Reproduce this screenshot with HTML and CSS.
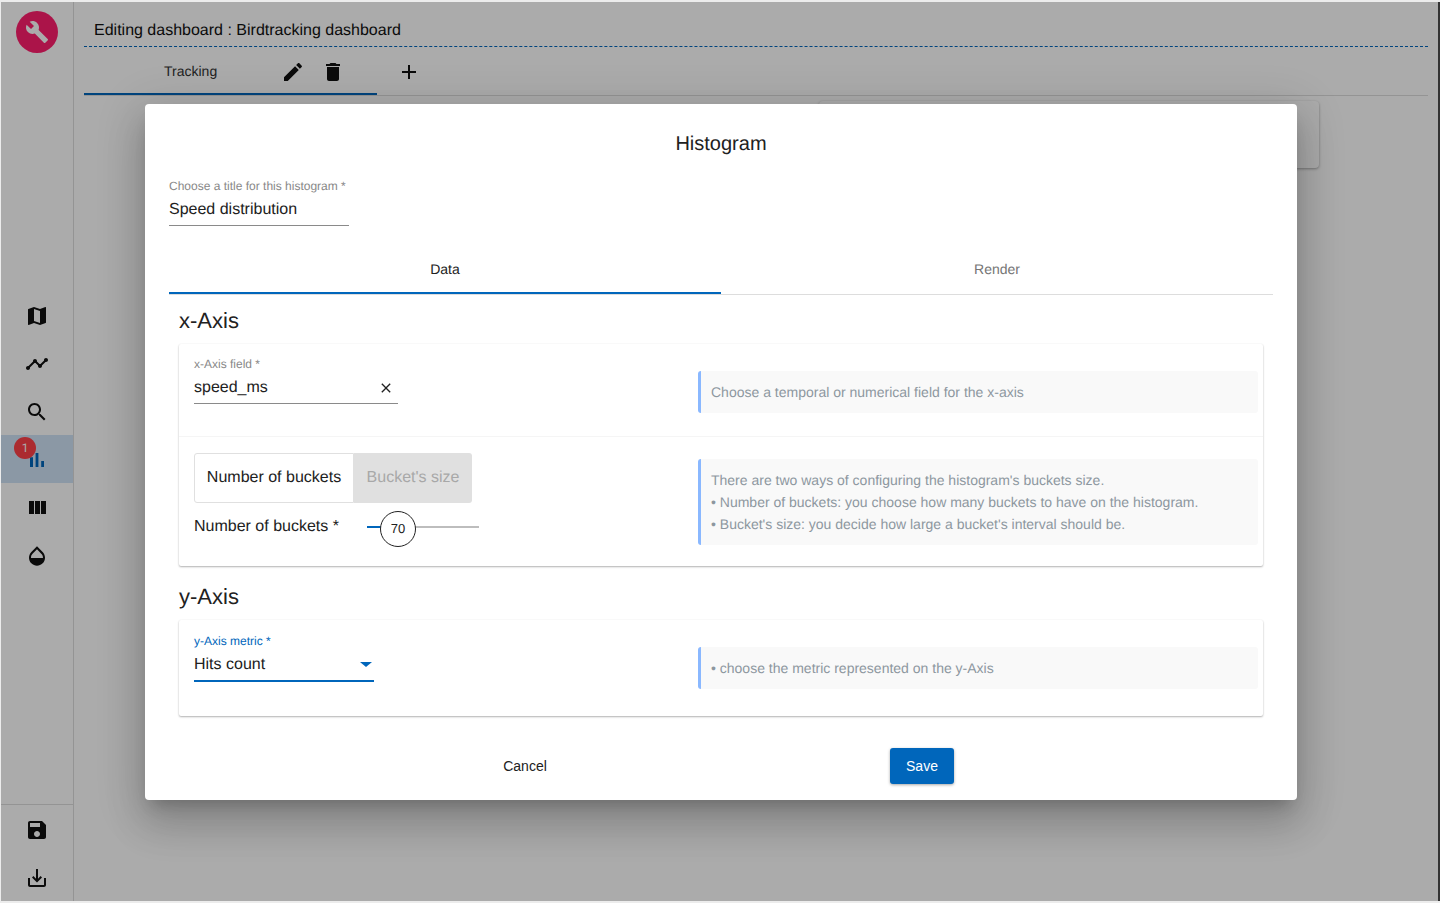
FILE: index.html
```html
<!DOCTYPE html>
<html lang="en">
<head>
    <meta charset="UTF-8">
    <meta name="viewport" content="width=device-width, initial-scale=1.0">
    <title>Editing dashboard</title>
    <link rel="stylesheet" href="styles.css">
</head>
<body>
    <div class="app">
        <aside class="sidebar">
            <div class="sidebar-top">
                <div class="logo">
                    <svg viewBox="0 0 24 24"><path d="M22.7 19l-9.1-9.1c.9-2.3.4-5-1.5-6.9-2-2-5-2.4-7.4-1.3L9 6 6 9 1.6 4.7C.4 7.1.9 10.1 2.9 12.1c1.9 1.9 4.6 2.4 6.9 1.5l9.1 9.1c.4.4 1 .4 1.4 0l2.3-2.3c.5-.4.5-1.1.1-1.4z"/></svg>
                </div>
            </div>
            <nav class="sidebar-nav">
                <div class="nav-item"><svg viewBox="0 0 24 24"><path d="M20.5 3l-.16.03L15 5.1 9 3 3.36 4.9c-.21.07-.36.25-.36.48V20.5c0 .28.22.5.5.5l.16-.03L9 18.9l6 2.1 5.64-1.9c.21-.07.36-.25.36-.48V3.5c0-.28-.22-.5-.5-.5zM15 19l-6-2.11V5l6 2.11V19z"/></svg></div>
                <div class="nav-item"><svg viewBox="0 0 24 24"><path d="M23 8c0 1.1-.9 2-2 2-.18 0-.35-.02-.51-.07l-3.56 3.55c.05.16.07.34.07.52 0 1.1-.9 2-2 2s-2-.9-2-2c0-.18.02-.36.07-.52l-2.55-2.55c-.16.05-.34.07-.52.07s-.36-.02-.52-.07l-4.55 4.56c.05.16.07.33.07.51 0 1.1-.9 2-2 2s-2-.9-2-2 .9-2 2-2c.18 0 .35.02.51.07l4.56-4.55C8.02 9.36 8 9.18 8 9c0-1.1.9-2 2-2s2 .9 2 2c0 .18-.02.36-.07.52l2.55 2.55c.16-.05.34-.07.52-.07s.36.02.52.07l3.55-3.56C19.02 8.35 19 8.18 19 8c0-1.1.9-2 2-2s2 .9 2 2z"/></svg></div>
                <div class="nav-item"><svg viewBox="0 0 24 24"><path d="M15.5 14h-.79l-.28-.27C15.41 12.59 16 11.11 16 9.5 16 5.91 13.09 3 9.5 3S3 5.91 3 9.5 5.91 16 9.5 16c1.61 0 3.09-.59 4.23-1.57l.27.28v.79l5 4.99L20.49 19l-4.99-5zm-6 0C7.01 14 5 11.99 5 9.5S7.01 5 9.5 5 14 7.01 14 9.5 11.99 14 9.5 14z"/></svg></div>
                <div class="nav-item active">
                    <svg viewBox="0 0 24 24"><path d="M5 9.2h3V19H5zM10.6 5h2.8v14h-2.8zm5.6 8H19v6h-2.8z"/></svg>
                    <span class="badge">1</span>
                </div>
                <div class="nav-item"><svg viewBox="0 0 24 24"><path d="M10 18h5V5h-5v13zm-6 0h5V5H4v13zM16 5v13h5V5h-5z"/></svg></div>
                <div class="nav-item"><svg viewBox="0 0 24 24"><path d="M17.66 8L12 2.35 6.34 8C4.78 9.56 4 11.64 4 13.64s.78 4.11 2.34 5.67 3.61 2.35 5.66 2.35 4.1-.79 5.66-2.35S20 15.64 20 13.64 19.22 9.56 17.66 8zM6 14c.01-2 .62-3.27 1.76-4.4L12 5.27l4.24 4.38C17.38 10.77 17.99 12 18 14H6z"/></svg></div>
            </nav>
            <div class="sidebar-bottom">
                <div class="nav-item"><svg viewBox="0 0 24 24"><path d="M17 3H5c-1.11 0-2 .9-2 2v14c0 1.1.89 2 2 2h14c1.1 0 2-.9 2-2V7l-4-4zm-5 16c-1.66 0-3-1.34-3-3s1.34-3 3-3 3 1.34 3 3-1.34 3-3 3zm3-10H5V5h10v4z"/></svg></div>
                <div class="nav-item"><svg viewBox="0 0 24 24"><path d="M19 12v7H5v-7H3v7c0 1.1.9 2 2 2h14c1.1 0 2-.9 2-2v-7h-2zm-6 .67l2.59-2.58L17 11.5l-5 5-5-5 1.41-1.41L11 12.67V3h2z"/></svg></div>
            </div>
        </aside>

        <main class="content">
            <div class="dash-title">Editing dashboard : Birdtracking dashboard</div>
            <div class="dash-tabs">
                <div class="dash-tab">
                    <span class="dash-tab-label">Tracking</span>
                    <svg class="tab-edit" viewBox="0 0 24 24"><path d="M3 17.25V21h3.75L17.81 9.94l-3.75-3.75L3 17.25zM20.71 7.04c.39-.39.39-1.02 0-1.41l-2.34-2.34c-.39-.39-1.02-.39-1.41 0l-1.83 1.83 3.75 3.75 1.83-1.83z"/></svg>
                    <svg class="tab-delete" viewBox="0 0 24 24"><path d="M6 19c0 1.1.9 2 2 2h8c1.1 0 2-.9 2-2V7H6v12zM19 4h-3.5l-1-1h-5l-1 1H5v2h14V4z"/></svg>
                </div>
                <svg class="tab-add" viewBox="0 0 24 24"><path d="M19 13h-6v6h-2v-6H5v-2h6V5h2v6h6v2z"/></svg>
            </div>
            <div class="dash-grid">
                <div class="dash-widget"></div>
            </div>
        </main>

        <div class="overlay"></div>
    </div>

    <div class="modal-wrap">
        <div class="modal">
            <h2 class="modal-title">Histogram</h2>

            <div class="title-field">
                <label class="field-label">Choose a title for this histogram *</label>
                <div class="field-value">Speed distribution</div>
            </div>

            <div class="modal-tabs">
                <div class="modal-tab selected">Data</div>
                <div class="modal-tab">Render</div>
            </div>

            <h3 class="section-title">x-Axis</h3>
            <div class="card">
                <div class="card-row row-field">
                    <div class="axis-field">
                        <label class="field-label">x-Axis field *</label>
                        <div class="field-value">
                            <span>speed_ms</span>
                            <svg class="clear-icon" viewBox="0 0 24 24"><path d="M19 6.41L17.59 5 12 10.59 6.41 5 5 6.41 10.59 12 5 17.59 6.41 19 12 13.41 17.59 19 19 17.59 13.41 12z"/></svg>
                        </div>
                    </div>
                    <div class="note">Choose a temporal or numerical field for the x-axis</div>
                </div>
                <div class="card-row row-buckets">
                    <div>
                        <div class="toggle">
                            <div class="toggle-btn on">Number of buckets</div>
                            <div class="toggle-btn off">Bucket's size</div>
                        </div>
                        <div class="slider-row">
                            <span class="slider-label">Number of buckets *</span>
                            <div class="slider">
                                <div class="slider-fill"></div>
                                <div class="slider-thumb">70</div>
                            </div>
                        </div>
                    </div>
                    <div class="note">
                        <div>There are two ways of configuring the histogram's buckets size.</div>
                        <div>• Number of buckets: you choose how many buckets to have on the histogram.</div>
                        <div>• Bucket's size: you decide how large a bucket's interval should be.</div>
                    </div>
                </div>
            </div>

            <h3 class="section-title second">y-Axis</h3>
            <div class="card">
                <div class="card-row row-metric">
                    <div class="metric-field">
                        <label class="field-label focus">y-Axis metric *</label>
                        <div class="field-value">
                            <span>Hits count</span>
                            <span class="select-arrow"></span>
                        </div>
                    </div>
                    <div class="note">• choose the metric represented on the y-Axis</div>
                </div>
            </div>

            <div class="modal-actions">
                <button class="btn-cancel">Cancel</button>
                <button class="btn-save">Save</button>
            </div>
        </div>
    </div>
</body>
</html>
```

FILE: styles.css
```css
* {
    box-sizing: border-box;
}
html, body {
    margin: 0;
    height: 903px;
    overflow: hidden;
}
body {
    font-family: "Liberation Sans", Arial, sans-serif;
    text-rendering: geometricPrecision;
    background-color: #ececec;
    color: #212121;
    position: relative;
}

/* page behind the dialog */
.app {
    position: relative;
    display: flex;
    height: 899px;
    margin: 2px 0 0 1px;
    background: #fff;
    border-right: 2px solid #333;
    color: #111;
}
.overlay {
    position: absolute;
    inset: 0;
    background: rgba(0, 0, 0, 0.33);
}
.sidebar {
    width: 73px;
    flex-shrink: 0;
    display: flex;
    flex-direction: column;
    border-right: 1px solid #ddd;
}
.sidebar-top {
    height: 289px;
    padding: 9px 0 0 15px;
}
.logo {
    width: 42px;
    height: 42px;
    border-radius: 50%;
    background: #ff1f6e;
    display: flex;
    align-items: center;
    justify-content: center;
}
.logo svg {
    width: 24px;
    height: 24px;
    fill: #fff;
}
.sidebar-nav {
    flex: 1;
}
.sidebar-bottom {
    border-top: 1px solid #ddd;
}
.nav-item {
    position: relative;
    height: 48px;
    padding-top: 2px;
    display: flex;
    align-items: center;
    justify-content: center;
}
.nav-item svg {
    width: 24px;
    height: 24px;
    fill: #111;
}
.nav-item.active {
    background: #cfe3f7;
}
.nav-item.active svg {
    fill: #0066bb;
}
.badge {
    position: absolute;
    left: 13px;
    top: 2px;
    width: 22px;
    height: 22px;
    border-radius: 50%;
    background: #ff4048;
    color: #fff;
    font-size: 12px;
    line-height: 22px;
    text-align: center;
    font-family: Roboto, sans-serif;
}
.content {
    flex: 1;
    padding: 0 10px 0 10px;
}
.dash-title {
    height: 45px;
    padding: 19px 0 0 10px;
    font-size: 16px;
    line-height: 20px;
    border-bottom: 1px dashed #0066bb;
}
.dash-tabs {
    display: flex;
    align-items: flex-start;
    height: 49px;
    border-bottom: 1px solid #ddd;
}
.dash-tab {
    width: 293px;
    height: 48px;
    display: flex;
    align-items: center;
    padding: 3px 0 0 80px;
    border-bottom: 2px solid #0066bb;
    font-size: 14px;
    color: #333;
}
.dash-tab-label {
    width: 117px;
    margin-top: -2px;
}
.dash-tab svg, .tab-add {
    width: 24px;
    height: 24px;
    fill: #111;
}
.tab-edit {
    margin-right: 16px;
}
.tab-add {
    margin: 13px 0 0 20px;
}
.dash-grid {
    display: flex;
    justify-content: flex-end;
    padding: 5px 109px 0 0;
}
.dash-widget {
    width: 500px;
    height: 67px;
    background: #fff;
    border-radius: 4px;
    box-shadow: 0 1px 3px rgba(0, 0, 0, 0.35);
}

/* dialog */
.modal-wrap {
    position: absolute;
    top: 104px;
    left: 145px;
}
.modal {
    width: 1152px;
    height: 696px;
    padding: 0 24px;
    background: #fff;
    border-radius: 4px;
    box-shadow: 0 11px 15px -7px rgba(0, 0, 0, 0.2), 0 24px 38px 3px rgba(0, 0, 0, 0.14), 0 9px 46px 8px rgba(0, 0, 0, 0.12);
}
.modal-title {
    margin: 0;
    padding-top: 27px;
    height: 73px;
    font-size: 20px;
    line-height: 26px;
    font-weight: normal;
    text-align: center;
    color: #212121;
}
.field-label {
    display: block;
    font-size: 12px;
    line-height: 14px;
    color: #888;
}
.field-label.focus {
    color: #0066bb;
}
.field-value {
    display: flex;
    justify-content: space-between;
    align-items: center;
    font-size: 16px;
    line-height: 20px;
    color: #212121;
}
.title-field {
    width: 180px;
    height: 49px;
    padding-top: 2px;
    border-bottom: 1px solid #8a8a8a;
    white-space: nowrap;
}
.title-field .field-value {
    margin-top: 7px;
}
.modal-tabs {
    display: flex;
    margin-top: 19px;
    height: 50px;
    border-bottom: 1px solid #ddd;
}
.modal-tab {
    flex: 1;
    height: 49px;
    display: flex;
    align-items: center;
    justify-content: center;
    border-bottom: 2px solid transparent;
    font-size: 14px;
    color: #757575;
}
.modal-tab.selected {
    color: #212121;
    border-bottom-color: #0066bb;
}
.section-title {
    margin: 0;
    padding: 13px 0 0 10px;
    height: 49px;
    font-size: 22px;
    line-height: 26px;
    font-weight: normal;
    color: #212121;
}
.section-title.second {
    margin-top: 5px;
}
.card {
    margin: 0 10px;
    background: #fff;
    border-radius: 2px;
    box-shadow: 0 1px 2px rgba(0, 0, 0, 0.3), 0 0 2px rgba(0, 0, 0, 0.04);
}
.card-row {
    display: grid;
    grid-template-columns: 504px 560px;
    padding: 0 5px 0 15px;
    align-items: start;
}
.row-field {
    height: 93px;
    padding-top: 27px;
    border-bottom: 1px solid #f5f5f5;
}
.row-buckets {
    height: 129px;
    padding-top: 16px;
}
.row-metric {
    height: 96px;
    padding-top: 27px;
}
.axis-field {
    width: 204px;
    margin-top: -14px;
    height: 47px;
    border-bottom: 1px solid #8a8a8a;
}
.axis-field .field-value {
    margin-top: 7px;
}
.clear-icon {
    width: 16px;
    height: 16px;
    fill: #212121;
    margin-right: 4px;
}
.metric-field {
    width: 180px;
    margin-top: -13px;
    height: 48px;
    border-bottom: 2px solid #0066bb;
}
.metric-field .field-value {
    margin-top: 7px;
}
.select-arrow {
    width: 0;
    height: 0;
    margin: -2px 2px 0 0;
    border-left: 6px solid transparent;
    border-right: 6px solid transparent;
    border-top: 5px solid #0066bb;
}
.note {
    padding: 10px 10px;
    background: #f9f9f9;
    border-left: 3px solid #8ab8ff;
    border-radius: 3px;
    font-size: 14px;
    line-height: 22px;
    color: #8d979f;
}
.row-buckets .note {
    margin-top: 6px;
}
.toggle {
    display: flex;
    width: 278px;
    height: 50px;
    border-radius: 3px;
    font-size: 16px;
}
.toggle-btn {
    display: flex;
    align-items: center;
    justify-content: center;
}
.toggle-btn.on {
    width: 160px;
    border: 1px solid #e0e0e0;
    border-radius: 3px 0 0 3px;
    color: #212121;
}
.toggle-btn.off {
    width: 118px;
    background: #e0e0e0;
    border-radius: 0 3px 3px 0;
    color: #a8a8a8;
}
.slider-row {
    display: flex;
    align-items: center;
    margin-top: 13px;
    height: 20px;
}
.slider-label {
    width: 173px;
    margin-top: 2px;
    font-size: 16px;
    color: #212121;
}
.slider {
    position: relative;
    width: 112px;
    height: 2px;
    margin-top: 2px;
    background: #bdbdbd;
}
.slider-fill {
    width: 14px;
    height: 2px;
    background: #0066bb;
}
.slider-thumb {
    position: absolute;
    left: 13px;
    top: -15px;
    width: 36px;
    height: 36px;
    border: 1px solid #212121;
    border-radius: 50%;
    background: #fff;
    font-size: 13px;
    line-height: 34px;
    text-align: center;
}
.modal-actions {
    display: flex;
    align-items: center;
    justify-content: center;
    gap: 335px;
    margin-top: 32px;
    padding-left: 7px;
}
.btn-cancel, .btn-save {
    font-family: inherit;
    font-size: 14px;
    height: 36px;
    border: none;
    border-radius: 3px;
    cursor: pointer;
}
.btn-cancel {
    width: 60px;
    padding: 0;
    background: none;
    color: #212121;
}
.btn-save {
    width: 64px;
    background: #0066bb;
    color: #fff;
    box-shadow: 0 1px 3px rgba(0, 0, 0, 0.35);
}
```
